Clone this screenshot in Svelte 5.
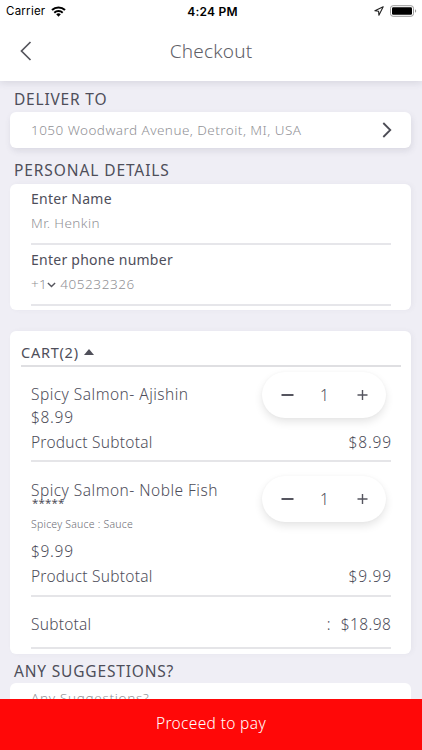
<script>
  const items = [
    { name: 'Spicy Salmon- Ajishin', price: '$8.99', cls: 'first' },
    { name: 'Spicy Salmon- Noble Fish', price: '$9.99', cls: 'second', stars: '*****', extra: 'Spicey Sauce : Sauce' }
  ];
</script>

<div class="screen">
  <header>
    <div class="status">
      <div class="side">
        <span class="carrier">Carrier</span>
        <svg width="15" height="11" viewBox="0 0 15 11" fill="none" stroke="#000">
          <path d="M1 4.1a9.3 9.3 0 0 1 13 0" stroke-width="2.1" />
          <path d="M3.3 6.7a6 6 0 0 1 8.4 0" stroke-width="1.9" />
          <path d="M5.2 8.3a3.3 3.3 0 0 1 4.6 0L7.5 10.8z" fill="#000" stroke="none" />
        </svg>
      </div>
      <span class="time">4:24 PM</span>
      <div class="side right">
        <svg width="10" height="10" viewBox="0 0 10 10" fill="none" stroke="#222" stroke-width="1.1" stroke-linejoin="round">
          <path d="M9.2.8.9 4.8l3.7.5.3 3.9z" />
        </svg>
        <svg width="27" height="12" viewBox="0 0 27 12">
          <rect x=".5" y=".7" width="23" height="10.6" rx="2.6" fill="none" stroke="#999" />
          <rect x="2" y="2.2" width="20" height="7.6" rx="1.2" fill="#000" />
          <path d="M25 4.2c1.6.6 1.6 3 0 3.6z" fill="#999" />
        </svg>
      </div>
    </div>
    <div class="nav">
      <svg width="12" height="20" viewBox="0 0 12 20" fill="none" stroke="#55555d" stroke-width="1.7"><path d="M10.5 1 1.5 10l9 9" /></svg>
      <h1>Checkout</h1>
      <i></i>
    </div>
  </header>

  <main>
    <h2 class="h-deliver">DELIVER TO</h2>
    <section class="card address">
      <span class="muted addr">1050 Woodward Avenue, Detroit, MI, USA</span>
      <svg width="10" height="16" viewBox="0 0 10 16" fill="none" stroke="#4c4c55" stroke-width="1.8"><path d="m1.3 1 7 7-7 7" /></svg>
    </section>

    <h2 class="h-personal">PERSONAL DETAILS</h2>
    <section class="card details">
      <div class="field">
        <div class="label"><span>Enter Name</span></div>
        <div class="muted value"><span>Mr. Henkin</span></div>
      </div>
      <div class="field">
        <div class="label"><span>Enter phone number</span></div>
        <div class="muted value v2">
          <span class="code">+1</span>
          <svg width="9" height="6" viewBox="0 0 9 6" fill="none" stroke="#55555d" stroke-width="1.4"><path d="m.9 1 3.6 3.6L8.1 1" /></svg>
          <span class="phone">405232326</span>
        </div>
      </div>
    </section>

    <section class="card cart">
      <div class="cart-title">
        <span>CART(2)</span>
        <svg width="10" height="6" viewBox="0 0 10 6"><path d="M0 6 5 0l5 6z" fill="#50505a" /></svg>
      </div>
      {#each items as item}
        <div class="item {item.cls}">
          <div class="top">
            <div class="info">
              <div class="name"><span>{item.name}</span></div>
              {#if item.stars}
                <div class="stars"><span>{item.stars}</span></div>
                <div class="extra"><span>{item.extra}</span></div>
              {/if}
              <div class="price"><span>{item.price}</span></div>
            </div>
            <div class="stepper">
              <svg width="13" height="12" viewBox="0 0 13 12" stroke="#55555f" stroke-width="2"><path d="M.5 6h12" /></svg>
              <span>1</span>
              <svg width="11" height="12" viewBox="0 0 11 12" stroke="#55555f" stroke-width="1.4"><path d="M.5 6h10M5.5 1v10" /></svg>
            </div>
          </div>
          <div class="row"><span>Product Subtotal</span><span class="amt">{item.price}</span></div>
        </div>
      {/each}
      <div class="row total"><span>Subtotal</span><span class="colon">:</span><span class="amt sum">$18.98</span></div>
    </section>

    <h2 class="h-sugg">ANY SUGGESTIONS?</h2>
    <section class="card suggestions"><span class="muted sg">Any Suggestions?</span></section>
  </main>

  <button>Proceed to pay</button>
</div>

<style>
  :global(body) { background: #efeef5; }
  .screen {
    width: 422px; height: 750px; overflow: hidden; display: flex; flex-direction: column;
    background: #efeef5; color: #4e4e5a; font-family: "Noto Sans", "Open Sans", sans-serif; font-weight: 300;
    font-size: 15.5px; white-space: nowrap;
  }
  svg { flex: none; display: block; }
  header { position: relative; height: 81px; flex: none; background: #fff; box-shadow: 0 2px 7px rgba(70, 70, 100, .14); }
  .status {
    height: 22px; display: flex; align-items: center; padding: 0 5px 0 6px; color: #000;
    font-family: Inter, Roboto, sans-serif; font-size: 11.5px;
  }
  .side { flex: 1; display: flex; align-items: center; gap: 6px; }
  .side.right { justify-content: flex-end; gap: 6px; }
  .carrier { font-weight: 400; letter-spacing: .25px; }
  .time { font-weight: 600; font-size: 12px; letter-spacing: .25px; padding-left: 2px; }
  .nav { height: 58px; display: flex; align-items: center; justify-content: space-between; padding: 0 20px; }
  .nav i { width: 12px; }
  h1 { margin: 0; font-weight: 300; font-size: 19px; letter-spacing: .2px; color: #606067; }
  main { flex: 1; min-height: 0; overflow: hidden; padding: 0 10px; }
  h2 {
    box-sizing: border-box; margin: 0; padding-left: 4px; font-size: 15.5px; font-weight: 400;
    display: flex; align-items: center;
  }
  .h-deliver { height: 31px; padding-top: 4px; letter-spacing: .8px; }
  .h-personal { height: 36px; padding-top: 8px; letter-spacing: .9px; }
  .h-sugg { height: 29px; padding-top: 4px; letter-spacing: .82px; }
  .card { box-sizing: border-box; width: 401px; background: #fff; border-radius: 6px; }
  .muted { color: #919196; font-size: 13.5px; }
  .address {
    height: 36px; display: flex; align-items: center; justify-content: space-between; padding: 0 19px 0 21px;
    box-shadow: 1px 3px 6px rgba(70, 70, 100, .12);
  }
  .addr { padding-bottom: 1px; letter-spacing: .46px; }
  .details { height: 126px; padding: 0 20px 0 21px; box-shadow: 2px 0 5px rgba(70, 70, 100, .05); }
  .field { box-sizing: border-box; height: 61px; padding-top: 3px; border-bottom: 2px solid #e6e6ea; }
  .label { height: 24px; line-height: 24px; font-size: 14px; font-weight: 400; letter-spacing: .25px; }
  .value { height: 25px; line-height: 25px; letter-spacing: .4px; }
  .v2 { display: flex; align-items: center; }
  .v2 svg { margin: 0 4px 0 0; }
  .phone { letter-spacing: .58px; }
  .cart { height: 323px; margin-top: 21px; padding: 0 20px 0 21px; box-shadow: 2px 0 5px rgba(70, 70, 100, .05); }
  .cart-title {
    box-sizing: border-box; height: 36px; margin: 0 -10px; padding-top: 8px; border-bottom: 2px solid #dfdfe2;
    display: flex; align-items: center; gap: 5px; font-size: 14.5px; font-weight: 400; letter-spacing: .75px;
  }
  .item { box-sizing: border-box; height: 95px; border-bottom: 2px solid #e5e5e8; }
  .second { height: 135px; }
  .top { display: flex; justify-content: space-between; align-items: flex-start; height: 63px; }
  .second .top { height: 102px; }
  .info { padding-top: 16px; }
  .second .info { padding-top: 17px; }
  .name, .price { height: 23px; line-height: 23px; }
  .name { letter-spacing: .47px; }
  .price { letter-spacing: .7px; }
  .stars { height: 6px; line-height: 1px; font-size: 11.5px; font-weight: 400; letter-spacing: .15px; padding-left: 1px; }
  .extra { height: 32px; line-height: 32px; font-size: 10.5px; letter-spacing: .22px; color: #6c6c74; }
  .stepper {
    box-sizing: border-box; width: 124px; height: 46px; margin: 5px 5px 0 0; padding: 0 18px 0 19px; border-radius: 23px;
    display: flex; align-items: center; justify-content: space-between; background: #fff;
    box-shadow: 0 4px 8px rgba(0, 0, 0, .1), 0 0 3px rgba(0, 0, 0, .03);
  }
  .stepper span { padding-right: 2px; }
  .second .stepper { margin-top: 14px; }
  .row { height: 24px; line-height: 24px; display: flex; letter-spacing: .23px; }
  .second .row { line-height: 25px; }
  .row .amt { margin-left: auto; margin-right: -.8px; letter-spacing: .8px; }
  .total { height: 52px; line-height: 55px; border-bottom: 2px solid #e5e5e8; box-sizing: border-box; }
  .total .colon { margin-left: auto; }
  .total .amt.sum { margin-left: 10px; margin-right: -.4px; letter-spacing: .45px; }
  .suggestions { height: 36px; padding: 3px 21px; }
  .sg { letter-spacing: .7px; }
  button {
    position: relative; height: 51px; flex: none; border: 0; padding: 0 0 3px; background: #ff0808; color: #fff;
    font: 300 15.5px "Noto Sans", "Open Sans", sans-serif; letter-spacing: .35px;
  }
</style>
